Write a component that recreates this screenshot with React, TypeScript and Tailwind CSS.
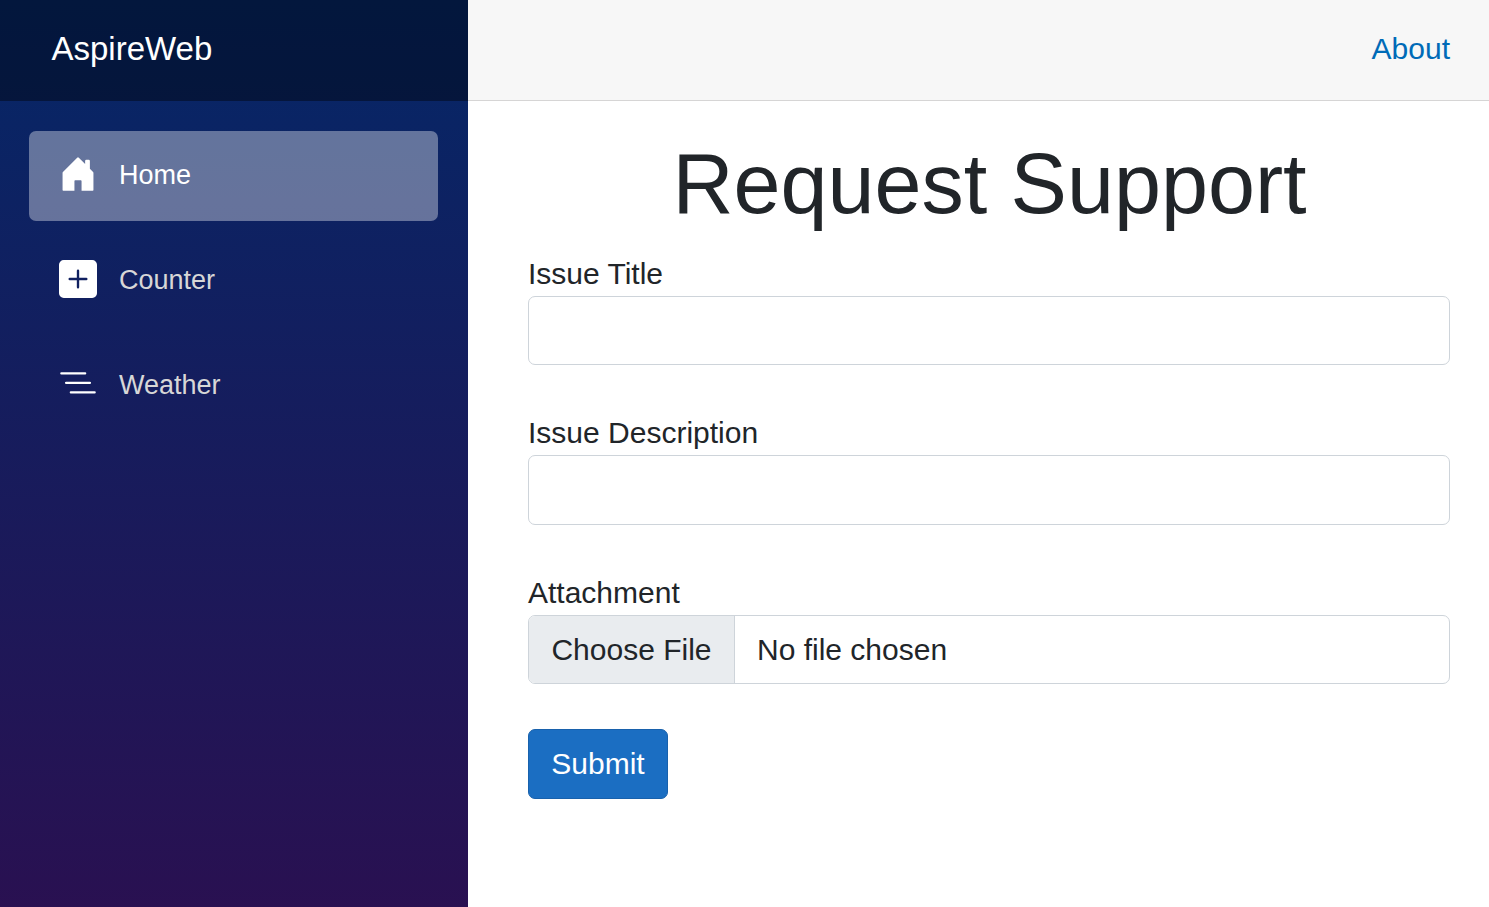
import React from "react";

const iconPaths = {
  home: "M6.5 15v-4.005c0-.245.1-.395.3-.395h2.4c.2 0 .3.15.3.4V15h4.7a.3.3 0 0 0 .3-.3V7.5a.5.5 0 0 0-.146-.354L13 5.793V2.5a.5.5 0 0 0-.5-.5h-1a.5.5 0 0 0-.5.5v1.293L8.354 1.146a.5.5 0 0 0-.708 0l-6 6A.5.5 0 0 0 1.5 7.5v7.2a.3.3 0 0 0 .3.3h4.7Z",
  counter: "M2 0a2 2 0 0 0-2 2v12a2 2 0 0 0 2 2h12a2 2 0 0 0 2-2V2a2 2 0 0 0-2-2H2zm6.5 4.5v3h3a.5.5 0 0 1 0 1h-3v3a.5.5 0 0 1-1 0v-3h-3a.5.5 0 0 1 0-1h3v-3a.5.5 0 0 1 1 0z",
  weather: "M4.5 11.5A.5.5 0 0 1 5 11h10a.5.5 0 0 1 0 1H5a.5.5 0 0 1-.5-.5zm-2-4A.5.5 0 0 1 3 7h10a.5.5 0 0 1 0 1H3a.5.5 0 0 1-.5-.5zm-2-4A.5.5 0 0 1 1 3h10a.5.5 0 0 1 0 1H1a.5.5 0 0 1-.5-.5z",
};

function NavItem({ icon, label, active = false }: { icon: keyof typeof iconPaths; label: string; active?: boolean }) {
  return (
    <a
      href="#"
      className={`flex h-[90px] items-center rounded-[7px] pl-[30px] text-[27px] ${
        active ? "bg-white/37 text-white" : "text-[#d7d7d7]"
      }`}
    >
      <svg viewBox="0 0 16 16" className="mr-[22px] mb-1 size-[38px] shrink-0 fill-white">
        <path d={iconPaths[icon]} />
      </svg>
      <span className="pb-0.5">{label}</span>
    </a>
  );
}

function TextField({ id, label, inputHeight }: { id: string; label: string; inputHeight: string }) {
  return (
    <div className="flex flex-col">
      <label htmlFor={id} className="h-[45px] leading-[45px]">{label}</label>
      <input id={id} type="text" className={`${inputHeight} rounded-[7px] border border-[#ced4da] bg-white px-[22px] outline-none`} />
    </div>
  );
}

export default function App() {
  return (
    <div className="flex h-[907px] w-full overflow-hidden bg-white font-['Liberation_Sans',Arial,sans-serif] text-[30px] text-[#212529]">
      <aside className="w-[468px] shrink-0 bg-[linear-gradient(180deg,#052767_0px,#3a0647_1330px)]">
        <div className="flex h-[101px] items-center bg-black/40 pb-[3px] pl-[51.5px] text-[33px] text-white">AspireWeb</div>
        <nav className="flex flex-col gap-[15px] pt-[30px] pr-[30px] pl-[29px]">
          <NavItem icon="home" label="Home" active />
          <NavItem icon="counter" label="Counter" />
          <NavItem icon="weather" label="Weather" />
        </nav>
      </aside>
      <main className="min-w-0 flex-1">
        <header className="flex h-[101px] items-center justify-end border-b border-[#d6d5d5] bg-[#f7f7f7] pr-[39px] pb-[3px]">
          <a href="#" className="text-[#006bb7]">About</a>
        </header>
        <form className="flex flex-col pt-[33px] pr-[39px] pl-[60px]" onSubmit={(e) => e.preventDefault()}>
          <h1 className="h-[117px] pl-px text-center text-[84.5px] leading-[100px]">Request Support</h1>
          <TextField id="title" label="Issue Title" inputHeight="h-[69px]" />
          <div className="mt-[45px] flex flex-col">
            <TextField id="description" label="Issue Description" inputHeight="h-[70px]" />
          </div>
          <span className="mt-[45px] h-[45px] leading-[45px]">Attachment</span>
          <div className="flex h-[69px] overflow-hidden rounded-[7px] border border-[#ced4da]">
            <button type="button" className="w-[206px] border-r border-[#ced4da] bg-[#e9ecef]">Choose File</button>
            <span className="pl-[22px] leading-[67px]">No file chosen</span>
          </div>
          <button type="submit" className="mt-[45px] h-[70px] w-[140px] rounded-[7px] border border-[#1861ac] bg-[#1b6ec2] pb-0.5 text-white">Submit</button>
        </form>
      </main>
    </div>
  );
}
